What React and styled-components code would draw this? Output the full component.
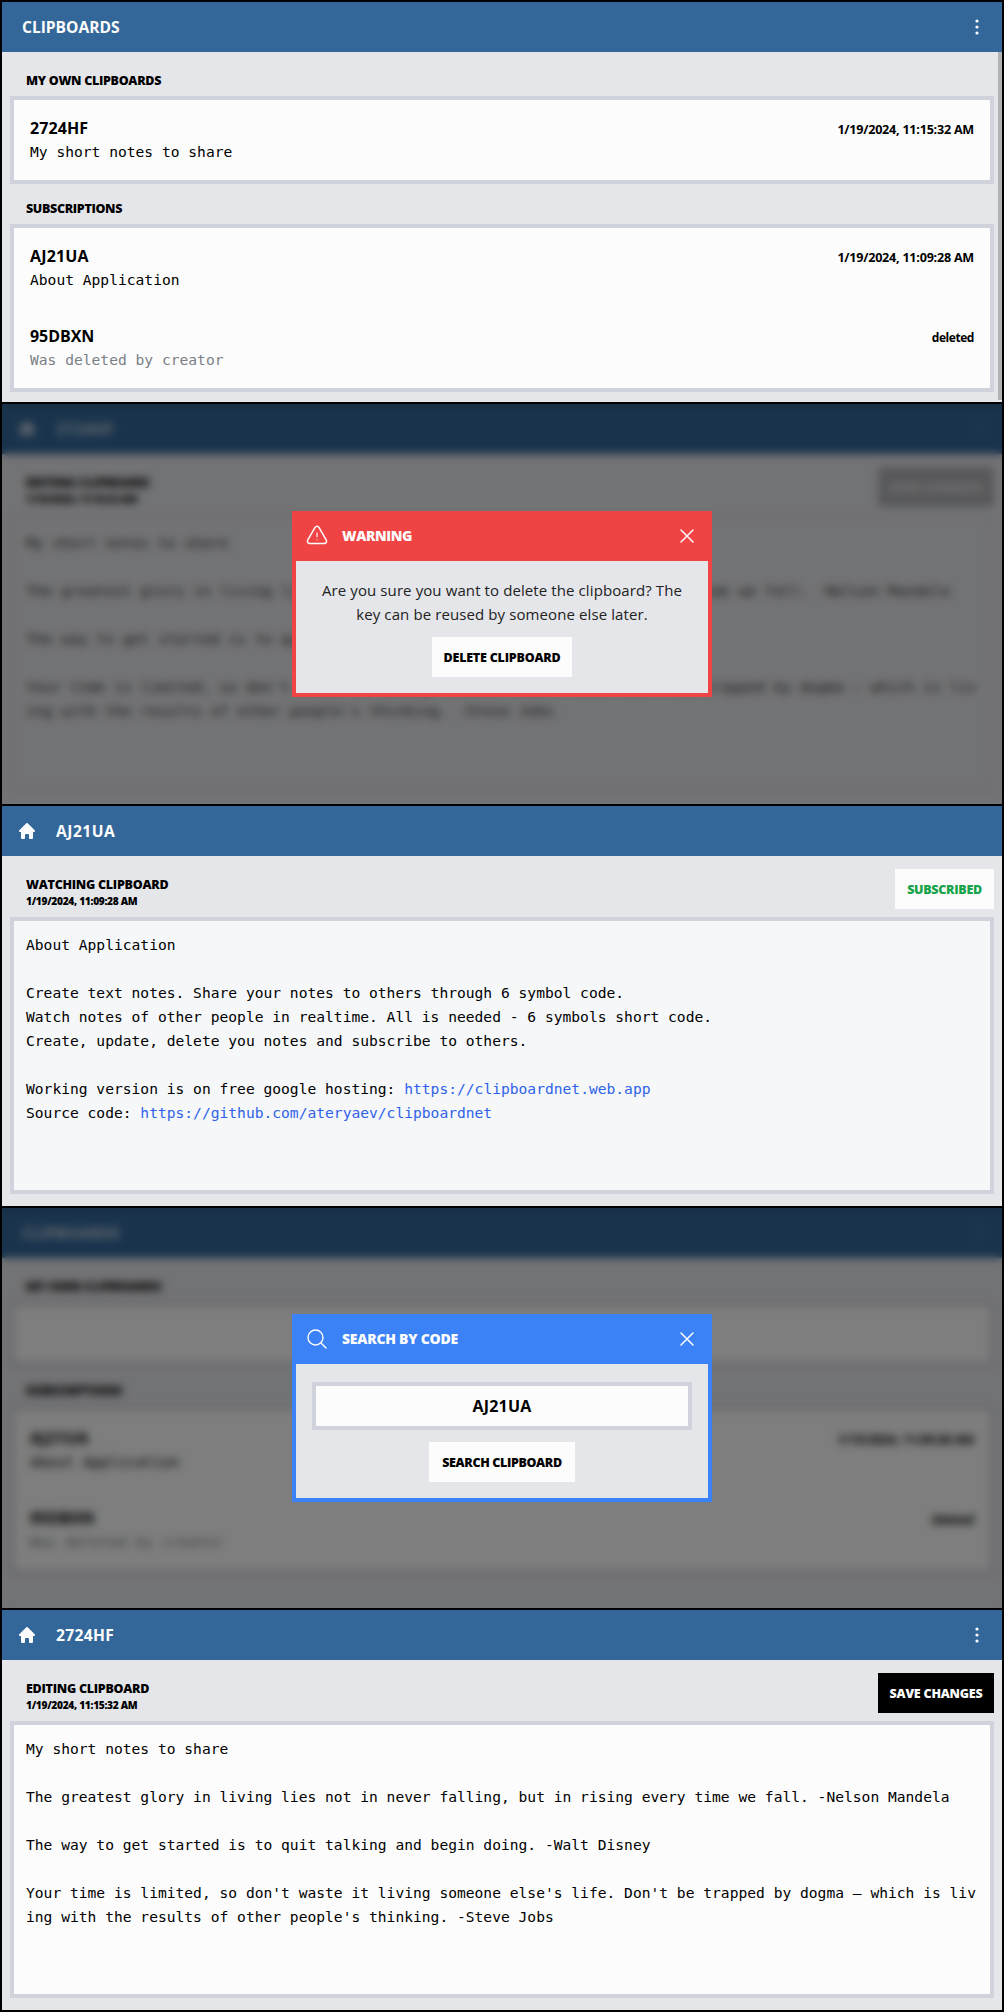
import React from 'react';
import styled, { createGlobalStyle } from 'styled-components';

const GlobalStyle = createGlobalStyle`
  *, *::before, *::after { box-sizing: border-box; }
  body {
    margin: 0;
    background: #000;
    color: #000;
    font-family: "Open Sans", "Noto Sans", sans-serif;
  }
`;

const mono = '"DejaVu Sans Mono", "Liberation Mono", monospace';

const Frame = styled.main`
  display: grid;
  grid-auto-rows: 400px;
  gap: 2px;
  width: 1004px;
  height: 2012px;
  padding: 2px;
  background: #000;
`;

const Screen = styled.section`
  position: relative;
  display: flex;
  flex-direction: column;
  overflow: hidden;
  background: #e5e6ea;
`;

const TopBar = styled.header`
  display: flex;
  align-items: center;
  flex: none;
  height: 50px;
  padding: 0 13px 0 ${(p) => (p.$home ? 15 : 20)}px;
  background: #336799;
  color: ${(p) => (p.$faint ? '#c3d0de' : '#fcfcfc')};
`;

const TopTitle = styled.h1`
  flex: 1;
  margin: 0 0 0 ${(p) => (p.$home ? 19 : 0)}px;
  font-size: 15.6px;
  font-weight: 700;
  line-height: 24px;
  letter-spacing: ${(p) => p.$ls || 0}px;
`;

const MenuIcon = styled.svg`
  display: block;
  opacity: ${(p) => (p.$faint ? 0.4 : 1)};
`;

const ListBody = styled.div`
  position: relative;
  flex: 1;
  display: flex;
  flex-direction: column;
  padding: 4px 8px 0;
`;

const ScrollThumb = styled.div`
  position: absolute;
  top: 0;
  right: 0;
  width: 4px;
  height: 348px;
  background: #b2b3b5;
`;

const SectionTitle = styled.h2`
  height: 40px;
  margin: 0;
  padding: 13px 16px 0;
  font-size: 12.5px;
  font-weight: 800;
  line-height: 23px;
  letter-spacing: ${(p) => p.$ls}px;
`;

const List = styled.ul`
  min-height: 64px;
  margin: 0;
  padding: 0;
  list-style: none;
  border: 4px solid #d1d3dc;
  background: #fcfcfc;
`;

const Item = styled.li`
  display: grid;
  grid-template-columns: 1fr auto;
  grid-auto-rows: 24px;
  height: 80px;
  padding: 16px;
  line-height: 24px;
`;

const Code = styled.span`
  font-size: 16px;
  font-weight: 700;
  letter-spacing: ${(p) => p.$ls}px;
`;

const Stamp = styled.span`
  padding-top: 2px;
  line-height: 23px;
  font-size: ${(p) => (p.$word ? 12 : 12.6)}px;
  font-weight: 700;
  letter-spacing: ${(p) => (p.$word ? -0.45 : -0.24)}px;
`;

const Preview = styled.span`
  font-family: ${mono};
  font-size: 14.617px;
  color: ${(p) => (p.$muted ? '#7b7f86' : '#000')};
`;

const NoteBody = styled.div`
  flex: 1;
  display: flex;
  flex-direction: column;
  gap: 8px;
  padding: 13px 8px 12px;
`;

const NoteHead = styled.div`
  display: flex;
  justify-content: space-between;
  height: 40px;
`;

const NoteMeta = styled.div`
  display: flex;
  flex-direction: column;
  padding: 6px 16px 0;
`;

const NoteTitle = styled.h2`
  margin: 0;
  font-size: 12.5px;
  font-weight: 800;
  line-height: 20px;
  letter-spacing: -0.27px;
`;

const NoteTime = styled.span`
  font-size: 10.2px;
  font-weight: 800;
  line-height: 13px;
  letter-spacing: -0.31px;
`;

const tones = {
  plain: ['#fcfcfc', '#000'],
  success: ['#fcfcfc', '#16a34a'],
  dark: ['#000', '#fcfcfc'],
  disabled: ['#b0b1b4', '#e2e2e5'],
};

const Button = styled.button`
  flex: none;
  width: ${(p) => p.$w}px;
  height: 40px;
  padding: 1px 0 0;
  border: 0;
  white-space: nowrap;
  font-family: inherit;
  font-size: 12.5px;
  font-weight: 800;
  line-height: 39px;
  letter-spacing: ${(p) => p.$ls}px;
  background: ${(p) => tones[p.$tone][0]};
  color: ${(p) => tones[p.$tone][1]};
`;

const fills = { edit: '#fcfcfc', watch: '#f5f7f9', locked: '#e5e6ea' };

const Note = styled.div`
  flex: 1;
  padding: 12px;
  border: 4px solid ${(p) => (p.$kind === 'locked' ? '#dcdde1' : '#d1d3dc')};
  background: ${(p) => fills[p.$kind]};
  color: ${(p) => (p.$kind === 'locked' ? '#333' : '#000')};
  font-family: ${mono};
  font-size: 14.617px;
  line-height: 24px;
  white-space: pre-wrap;
  word-break: break-all;
`;

const Link = styled.a`
  color: #2f62e8;
`;

const Overlay = styled.div`
  position: absolute;
  inset: 0;
  display: flex;
  align-items: center;
  justify-content: center;
  background: rgba(0, 0, 0, 0.5);
  backdrop-filter: blur(4px);
`;

const Dialog = styled.div`
  width: 420px;
  border: 4px solid ${(p) => p.$accent};
  background: #e5e6ea;
`;

const DialogBar = styled.div`
  display: flex;
  align-items: center;
  height: 46px;
  padding: 0 9px 4px;
  background: ${(p) => p.$accent};
  color: #fcfcfc;
`;

const DialogTitle = styled.h2`
  flex: 1;
  margin: 0 0 0 13px;
  font-size: 14px;
  font-weight: 800;
  line-height: 24px;
  letter-spacing: ${(p) => p.$ls}px;
`;

const DialogBody = styled.div`
  display: flex;
  flex-direction: column;
  align-items: center;
  gap: 12px;
  padding: ${(p) => p.$top}px 16px 16px;
`;

const Message = styled.p`
  height: 48px;
  margin: 0;
  padding-top: 1px;
  font-size: 15px;
  font-weight: 400;
  line-height: 24px;
  letter-spacing: 0.1px;
  text-align: center;
  color: #222;
`;

const CodeField = styled.div`
  width: 100%;
  height: 48px;
  border: 4px solid #d1d3dc;
  background: #fcfcfc;
  font-size: 16px;
  font-weight: 700;
  line-height: 40px;
  letter-spacing: 0.2px;
  text-align: center;
`;

const outline = {
  width: 24,
  height: 24,
  viewBox: '0 0 24 24',
  fill: 'none',
  stroke: 'currentColor',
  strokeLinecap: 'round',
  strokeLinejoin: 'round',
};

const HomeIcon = () => (
  <svg width="20" height="20" viewBox="0 0 20 20" fill="currentColor">
    <path d="M9.293 2.293a1 1 0 0 1 1.414 0l7 7A1 1 0 0 1 17 11h-1v6a1 1 0 0 1-1 1h-2a1 1 0 0 1-1-1v-3a1 1 0 0 0-1-1H9a1 1 0 0 0-1 1v3a1 1 0 0 1-1 1H5a1 1 0 0 1-1-1v-6H3a1 1 0 0 1-.707-1.707l7-7Z" />
  </svg>
);

const DotsIcon = ({ faint }) => (
  <MenuIcon width="24" height="24" viewBox="0 0 24 24" fill="currentColor" $faint={faint}>
    <circle cx="12" cy="6" r="1.6" />
    <circle cx="12" cy="12" r="1.6" />
    <circle cx="12" cy="18" r="1.6" />
  </MenuIcon>
);

const WarningIcon = () => (
  <svg {...outline} strokeWidth="1.5">
    <path d="M2.697 16.126c-.866 1.5.217 3.374 1.948 3.374h14.71c1.73 0 2.813-1.874 1.948-3.374L13.949 3.378c-.866-1.5-3.032-1.5-3.898 0L2.697 16.126Z" />
    <path d="M12 9v3.75M12 15.75h.007v.008H12v-.008Z" strokeWidth="1.2" />
  </svg>
);

const SearchIcon = () => (
  <svg {...outline} strokeWidth="1.4">
    <path d="m21 21-5.197-5.197m0 0A7.5 7.5 0 1 0 5.196 5.196a7.5 7.5 0 0 0 10.607 10.607Z" />
  </svg>
);

const CloseIcon = () => (
  <svg {...outline} strokeWidth="1.5">
    <path d="M6 18 18 6M6 6l12 12" />
  </svg>
);

function Bar({ title, ls, home, menu, faint }) {
  return (
    <TopBar $home={home} $faint={faint}>
      {home && <HomeIcon />}
      <TopTitle $home={home} $ls={ls}>{title}</TopTitle>
      {menu && <DotsIcon faint={faint} />}
    </TopBar>
  );
}

function Entry({ code, ls, stamp, word, text, muted }) {
  return (
    <Item>
      <Code $ls={ls}>{code}</Code>
      <Stamp $word={word}>{stamp}</Stamp>
      <Preview $muted={muted}>{text}</Preview>
    </Item>
  );
}

function Clipboards({ own, scroll }) {
  return (
    <ListBody>
      <SectionTitle $ls={-0.3}>MY OWN CLIPBOARDS</SectionTitle>
      <List>
        {own && <Entry code="2724HF" ls={0.1} stamp="1/19/2024, 11:15:32 AM" text="My short notes to share" />}
      </List>
      <SectionTitle $ls={-0.34}>SUBSCRIPTIONS</SectionTitle>
      <List>
        <Entry code="AJ21UA" ls={0.15} stamp="1/19/2024, 11:09:28 AM" text="About Application" />
        <Entry code="95DBXN" ls={-0.05} stamp="deleted" word text="Was deleted by creator" muted />
      </List>
      {scroll && <ScrollThumb />}
    </ListBody>
  );
}

function NoteView({ title, time, button, kind, children }) {
  return (
    <NoteBody>
      <NoteHead>
        <NoteMeta>
          <NoteTitle>{title}</NoteTitle>
          <NoteTime>{time}</NoteTime>
        </NoteMeta>
        {button}
      </NoteHead>
      <Note $kind={kind}>{children}</Note>
    </NoteBody>
  );
}

function Modal({ accent, icon, title, ls, top, children }) {
  return (
    <Overlay>
      <Dialog $accent={accent}>
        <DialogBar $accent={accent}>
          {icon}
          <DialogTitle $ls={ls}>{title}</DialogTitle>
          <CloseIcon />
        </DialogBar>
        <DialogBody $top={top}>{children}</DialogBody>
      </Dialog>
    </Overlay>
  );
}

const quotes = `My short notes to share

The greatest glory in living lies not in never falling, but in rising every time we fall. -Nelson Mandela

The way to get started is to quit talking and begin doing. -Walt Disney

Your time is limited, so don't waste it living someone else's life. Don't be trapped by dogma – which is living with the results of other people's thinking. -Steve Jobs`;

const about = `About Application

Create text notes. Share your notes to others through 6 symbol code.
Watch notes of other people in realtime. All is needed - 6 symbols short code.
Create, update, delete you notes and subscribe to others.

Working version is on free google hosting: `;

export default function App() {
  return (
    <>
      <GlobalStyle />
      <Frame>
        <Screen>
          <Bar title="CLIPBOARDS" ls={-0.03} menu />
          <Clipboards own scroll />
        </Screen>

        <Screen>
          <Bar title="2724HF" ls={0.35} home menu faint />
          <NoteView
            title="EDITING CLIPBOARD"
            time="1/19/2024, 11:15:32 AM"
            kind="locked"
            button={<Button $tone="disabled" $w={116} $ls={-0.23}>SAVE CHANGES</Button>}
          >
            {quotes}
          </NoteView>
          <Modal accent="#f04444" icon={<WarningIcon />} title="WARNING" ls={-0.4} top={16}>
            <Message>Are you sure you want to delete the clipboard? The key can be reused by someone else later.</Message>
            <Button $tone="plain" $w={140} $ls={-0.22}>DELETE CLIPBOARD</Button>
          </Modal>
        </Screen>

        <Screen>
          <Bar title="AJ21UA" ls={0.5} home />
          <NoteView
            title="WATCHING CLIPBOARD"
            time="1/19/2024, 11:09:28 AM"
            kind="watch"
            button={<Button $tone="success" $w={99} $ls={-0.3}>SUBSCRIBED</Button>}
          >
            {about}
            <Link>https://clipboardnet.web.app</Link>
            {'\nSource code: '}
            <Link>https://github.com/ateryaev/clipboardnet</Link>
          </NoteView>
        </Screen>

        <Screen>
          <Bar title="CLIPBOARDS" ls={-0.03} menu faint />
          <Clipboards />
          <Modal accent="#3b82f6" icon={<SearchIcon />} title="SEARCH BY CODE" ls={-0.25} top={18}>
            <CodeField>AJ21UA</CodeField>
            <Button $tone="plain" $w={146} $ls={-0.36}>SEARCH CLIPBOARD</Button>
          </Modal>
        </Screen>

        <Screen>
          <Bar title="2724HF" ls={0.35} home menu />
          <NoteView
            title="EDITING CLIPBOARD"
            time="1/19/2024, 11:15:32 AM"
            kind="edit"
            button={<Button $tone="dark" $w={116} $ls={-0.23}>SAVE CHANGES</Button>}
          >
            {quotes}
          </NoteView>
        </Screen>
      </Frame>
    </>
  );
}
